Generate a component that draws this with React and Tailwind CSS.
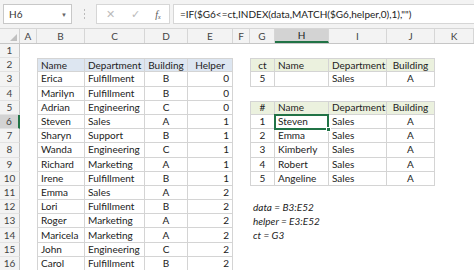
import React from "react";

const cols = [
  { k: "A", w: "w-[17px]" },
  { k: "B", w: "w-[48px]" },
  { k: "C", w: "w-[60px]" },
  { k: "D", w: "w-[43px]" },
  { k: "E", w: "w-[45px]" },
  { k: "F", w: "w-[17px]" },
  { k: "G", w: "w-[25px]" },
  { k: "H", w: "w-[54px]" },
  { k: "I", w: "w-[58px]" },
  { k: "J", w: "w-[48px]" },
  { k: "K", w: "flex-1" },
];

const people = [
  ["Erica", "Fulfillment", "B", "0"],
  ["Marilyn", "Fulfillment", "B", "0"],
  ["Adrian", "Engineering", "C", "0"],
  ["Steven", "Sales", "A", "1"],
  ["Sharyn", "Support", "B", "1"],
  ["Wanda", "Engineering", "C", "1"],
  ["Richard", "Marketing", "A", "1"],
  ["Irene", "Fulfillment", "B", "1"],
  ["Emma", "Sales", "A", "2"],
  ["Lori", "Fulfillment", "B", "2"],
  ["Roger", "Marketing", "A", "2"],
  ["Maricela", "Marketing", "A", "2"],
  ["John", "Engineering", "C", "2"],
  ["Carol", "Fulfillment", "B", "2"],
];

const results = [
  ["1", "Steven", "Sales", "A"],
  ["2", "Emma", "Sales", "A"],
  ["3", "Kimberly", "Sales", "A"],
  ["4", "Robert", "Sales", "A"],
  ["5", "Angeline", "Sales", "A"],
];

// returns {text, align, fill, table, top, left, italic} for a cell
function cellInfo(r, c) {
  const L = ["B", "C", "D", "E"];
  const R = ["G", "H", "I", "J"];
  const alignL = { B: "left", C: "left", D: "center", E: "right" };
  const alignR = { G: "center", H: "left", I: "left", J: "center" };

  if (r >= 2 && r <= 16 && L.includes(c)) {
    const i = L.indexOf(c);
    const head = r === 2;
    const text = head ? ["Name", "Department", "Building", "Helper"][i] : people[r - 3][i];
    return {
      text,
      align: head ? (c === "B" || c === "C" ? "left" : "center") : alignL[c],
      fill: head ? "bg-[#dde6f1]" : "",
      table: true,
      top: head,
      left: c === "B",
    };
  }
  if (r >= 2 && r <= 3 && R.includes(c)) {
    const i = R.indexOf(c);
    const head = r === 2;
    const text = head ? ["ct", "Name", "Department", "Building"][i] : ["5", "", "Sales", "A"][i];
    return {
      text,
      align: alignR[c],
      fill: head ? "bg-[#ebf1de]" : "",
      table: true,
      top: head,
      left: c === "G",
    };
  }
  if (r >= 5 && r <= 10 && R.includes(c)) {
    const i = R.indexOf(c);
    const head = r === 5;
    const text = head ? ["#", "Name", "Department", "Building"][i] : results[r - 6][i];
    return {
      text,
      align: alignR[c],
      fill: head ? "bg-[#ebf1de]" : "",
      table: true,
      top: head,
      left: c === "G",
    };
  }
  if (c === "G" && r >= 12 && r <= 14) {
    const t = { 12: "data = B3:E52", 13: "helper = E3:E52", 14: "ct = G3" }[r];
    return { text: t, align: "left", italic: true };
  }
  return null;
}

const alignCls = { left: "justify-start", center: "justify-center", right: "justify-end" };

function Cell({ r, col }) {
  const info = cellInfo(r, col.k);
  if (!info) return <div className={`${col.w} shrink-0 h-full`} />;
  const border = info.table
    ? `border-r border-b border-[#d4d4d4] ${info.top ? "border-t" : ""} ${info.left ? "border-l" : ""}`
    : "";
  return (
    <div
      className={`${col.w} shrink-0 h-full flex items-center px-[3px] whitespace-nowrap ${
        info.italic ? "overflow-visible italic" : "overflow-hidden"
      } ${alignCls[info.align]} ${info.fill || ""} ${border}`}
    >
      {info.text}
    </div>
  );
}

export default function App() {
  const rows = Array.from({ length: 16 }, (_, i) => i + 1);
  return (
    <div
      className="w-[474px] h-[270px] overflow-hidden bg-white text-[10px] text-[#222]"
      style={{ fontFamily: "Lato, 'Liberation Sans', sans-serif" }}
    >
      {/* formula bar */}
      <div className="h-[29px] bg-[#f3f3f3] flex items-center pl-[3px] gap-[3px] border-b border-[#d6d6d6]">
        <div className="w-[69px] h-[20px] bg-white border border-[#c8c8c8] flex items-center justify-between pl-[5px] pr-[4px] text-[#333]">
          <span>H6</span>
          <span className="text-[6px] text-[#666]">▼</span>
        </div>
        <div className="w-[18px] flex flex-col items-center gap-[2px]">
          <div className="w-[1px] h-[2px] bg-[#bbb]" />
          <div className="w-[1px] h-[2px] bg-[#bbb]" />
          <div className="w-[1px] h-[2px] bg-[#bbb]" />
        </div>
        <div className="w-[74px] h-[20px] bg-white border border-[#d6d6d6] flex items-center text-[#bbb]">
          <span className="w-[26px] text-center text-[11px]">✕</span>
          <span className="w-[24px] text-center text-[11px]">✓</span>
          <span
            className="w-[22px] text-center italic text-[#555] text-[10px]"
            style={{ fontFamily: "'Liberation Serif', serif" }}
          >
            f<sub className="text-[6px]">x</sub>
          </span>
        </div>
        <div className="flex-1 h-[20px] bg-white border border-[#d6d6d6] border-r-0 flex items-center pl-[6px] text-[#222]">
          =IF($G6&lt;=ct,INDEX(data,MATCH($G6,helper,0),1),"")
        </div>
      </div>

      {/* column headers */}
      <div className="h-[15px] flex bg-[#f3f3f3] border-b border-[#c6c6c6] text-[#444]">
        <div className="w-[20px] shrink-0 h-full border-r border-[#d0d0d0] relative">
          <div className="absolute right-[2px] bottom-[2px] w-0 h-0 border-l-[7px] border-l-transparent border-b-[7px] border-b-[#c0c0c0]" />
        </div>
        {cols.map((c) => (
          <div
            key={c.k}
            className={`${c.w} shrink-0 h-full flex items-center justify-center border-r border-[#d6d6d6] ${
              c.k === "H" ? "bg-[#d3d3d3] border-b-2 border-b-[#217346] text-[#222]" : ""
            }`}
          >
            {c.k}
          </div>
        ))}
      </div>

      {/* rows */}
      <div className="relative">
        {rows.map((r) => (
          <div key={r} className="h-[14.2px] flex">
            <div
              className={`w-[20px] shrink-0 h-full flex items-center justify-center text-[#444] border-b border-[#e2e2e2] ${
                r === 6
                  ? "bg-[#d3d3d3] border-r-2 border-r-[#217346] text-[#222]"
                  : "bg-[#f3f3f3] border-r border-r-[#c6c6c6]"
              }`}
            >
              {r}
            </div>
            {cols.map((c) => (
              <Cell key={c.k} r={r} col={c} />
            ))}
          </div>
        ))}
        {/* active cell H6 */}
        <div className="absolute left-[274px] top-[70px] w-[55px] h-[16px] border-2 border-[#217346] pointer-events-none">
          <div className="absolute right-[-4px] bottom-[-4px] w-[5px] h-[5px] bg-[#217346] border border-white" />
        </div>
      </div>
    </div>
  );
}
